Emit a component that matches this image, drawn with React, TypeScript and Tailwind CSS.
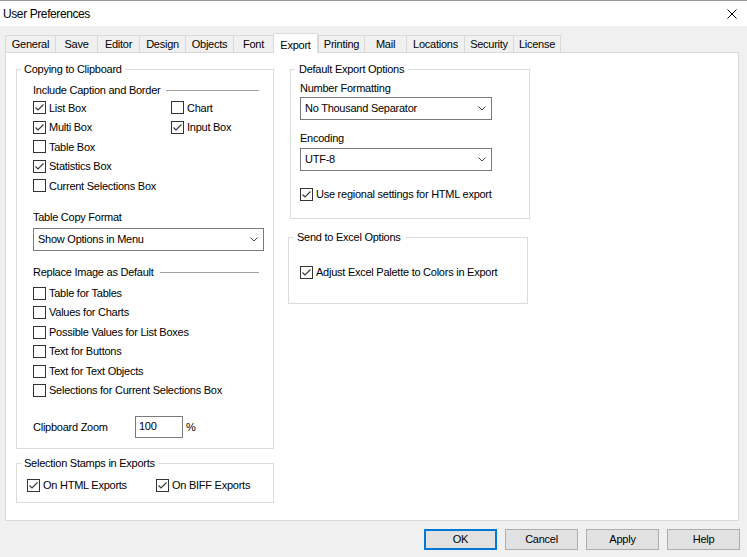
import React from 'react';

const tabs = [
  { name: 'General', w: 'w-[50px]' },
  { name: 'Save', w: 'w-[42px]' },
  { name: 'Editor', w: 'w-[42px]' },
  { name: 'Design', w: 'w-[46px]' },
  { name: 'Objects', w: 'w-[48px]' },
  { name: 'Font', w: 'w-[40px]' },
  { name: 'Export', w: 'w-[45px]', active: true },
  { name: 'Printing', w: 'w-[46px]' },
  { name: 'Mail', w: 'w-[42px]' },
  { name: 'Locations', w: 'w-[58px]' },
  { name: 'Security', w: 'w-[49px]' },
  { name: 'License', w: 'w-[48px]', last: true },
];

function Check({ checked }: { checked?: boolean }) {
  return (
    <span className="w-[13px] h-[13px] border border-[#333] bg-white flex items-center justify-center shrink-0">
      {checked && (
        <svg width="11" height="11" viewBox="0 0 11 11">
          <path d="M1.5 5.5L4 8L9.5 2.5" fill="none" stroke="#3a3a3a" strokeWidth="1.2" />
        </svg>
      )}
    </span>
  );
}

function CheckRow({ label, checked }: { label: string; checked?: boolean }) {
  return (
    <div className="h-[19.5px] flex items-center">
      <Check checked={checked} />
      <span className="ml-[3px] whitespace-nowrap">{label}</span>
    </div>
  );
}

function Select({ value, className }: { value: string; className: string }) {
  return (
    <div className={`h-[23px] border border-[#7a7a7a] bg-white flex items-center pl-[4px] pr-[5px] ${className}`}>
      <span className="flex-1">{value}</span>
      <svg width="8" height="5" viewBox="0 0 8 5">
        <path d="M0.5 0.5L4 4L7.5 0.5" fill="none" stroke="#444" strokeWidth="1" />
      </svg>
    </div>
  );
}

function Heading({ label }: { label: string }) {
  return (
    <div className="h-[16px] flex items-center">
      <span className="whitespace-nowrap">{label}</span>
      <span className="flex-1 h-px bg-[#a0a0a0] ml-[6px]" />
    </div>
  );
}

export default function App() {
  return (
    <div className="w-[747px] h-[557px] bg-[#f0f0f0] text-black text-[11px] tracking-[-0.25px] font-['Liberation_Sans',Arial,sans-serif] overflow-hidden">
      {/* title bar */}
      <div className="h-[26px] bg-white border-t border-[#999] flex items-center pl-[3px] pr-[10px]">
        <span className="flex-1 text-[12px] tracking-[-0.4px]">User Preferences</span>
        <svg width="10" height="10" viewBox="0 0 10 10">
          <path d="M0.5 0.5L9.5 9.5M9.5 0.5L0.5 9.5" stroke="#000" strokeWidth="1" />
        </svg>
      </div>

      {/* tabs */}
      <div className="flex items-end pl-[5px] pt-[7px]">
        {tabs.map((t) =>
          t.active ? (
            <div
              key={t.name}
              className={`${t.w} h-[20px] relative z-10 bg-white border border-b-0 border-[#d9d9d9] flex items-start justify-center pt-[3px]`}
            >
              {t.name}
            </div>
          ) : (
            <div
              key={t.name}
              className={`${t.w} h-[18px] border-l border-t border-[#d9d9d9] ${t.last ? 'border-r' : ''} flex items-center justify-center pb-[1px]`}
            >
              {t.name}
            </div>
          ),
        )}
      </div>

      {/* panel */}
      <div className="ml-[5px] -mt-px w-[734px] h-[469px] bg-white border border-[#d9d9d9] flex pl-[10px] pt-[8px]">
        {/* left column */}
        <div className="w-[258px] flex flex-col">
          <fieldset className="min-w-0 border border-[#dcdcdc]">
            <legend className="ml-[4px] px-[3px] leading-[16px]">Copying to Clipboard</legend>
            <div className="pl-[16px] pr-[14px] pb-[10px]">
              <div className="mt-[5px]">
                <Heading label="Include Caption and Border" />
              </div>
              <div className="grid grid-cols-[138px_1fr]">
                <CheckRow label="List Box" checked />
                <CheckRow label="Chart" />
                <CheckRow label="Multi Box" checked />
                <CheckRow label="Input Box" checked />
                <CheckRow label="Table Box" />
                <div />
                <CheckRow label="Statistics Box" checked />
                <div />
                <CheckRow label="Current Selections Box" />
              </div>
              <div className="mt-[13.5px] h-[16px] flex items-center">Table Copy Format</div>
              <Select value="Show Options in Menu" className="mt-[3px] w-[231px]" />
              <div className="mt-[13px]">
                <Heading label="Replace Image as Default" />
              </div>
              <div className="mt-[3.25px]">
                <CheckRow label="Table for Tables" />
                <CheckRow label="Values for Charts" />
                <CheckRow label="Possible Values for List Boxes" />
                <CheckRow label="Text for Buttons" />
                <CheckRow label="Text for Text Objects" />
                <CheckRow label="Selections for Current Selections Box" />
              </div>
              <div className="mt-[15.75px] flex items-center">
                <span className="w-[102px]">Clipboard Zoom</span>
                <div className="w-[48px] h-[22px] border border-[#7a7a7a] bg-white flex items-center pl-[3px] pb-[2px]">100</div>
                <span className="ml-[3px]">%</span>
              </div>
            </div>
          </fieldset>

          <fieldset className="min-w-0 mt-[6px] border border-[#dcdcdc]">
            <legend className="ml-[4px] px-[3px] leading-[16px]">Selection Stamps in Exports</legend>
            <div className="pl-[10px] pt-[4.75px] pb-[6.75px] flex">
              <div className="w-[129px]">
                <CheckRow label="On HTML Exports" checked />
              </div>
              <CheckRow label="On BIFF Exports" checked />
            </div>
          </fieldset>
        </div>

        {/* right column */}
        <div className="ml-[16px] flex flex-col">
          <fieldset className="min-w-0 w-[240px] border border-[#dcdcdc]">
            <legend className="ml-[4px] px-[4px] leading-[16px]">Default Export Options</legend>
            <div className="pl-[9px] pb-[14.25px]">
              <div className="mt-[3px] h-[16px] flex items-center">Number Formatting</div>
              <Select value="No Thousand Separator" className="mt-[1px] w-[192px]" />
              <div className="mt-[10px] h-[16px] flex items-center">Encoding</div>
              <Select value="UTF-8" className="mt-[2px] w-[192px]" />
              <div className="mt-[13.25px]">
                <CheckRow label="Use regional settings for HTML export" checked />
              </div>
            </div>
          </fieldset>

          <fieldset className="min-w-0 mt-[10px] -ml-[2px] w-[240px] border border-[#dcdcdc]">
            <legend className="ml-[4px] px-[4px] leading-[16px]">Send to Excel Options</legend>
            <div className="pl-[11px] pt-[17.25px] pb-[21.25px]">
              <CheckRow label="Adjust Excel Palette to Colors in Export" checked />
            </div>
          </fieldset>
        </div>
      </div>

      {/* buttons */}
      <div className="mt-[8px] pr-[7px] flex justify-end gap-[8px]">
        <button className="w-[73px] h-[21px] bg-[#e1e1e1] border-2 border-[#0078d7] flex items-center justify-center">OK</button>
        <button className="w-[73px] h-[21px] bg-[#e1e1e1] border border-[#adadad] flex items-center justify-center">Cancel</button>
        <button className="w-[73px] h-[21px] bg-[#e1e1e1] border border-[#adadad] flex items-center justify-center">Apply</button>
        <button className="w-[73px] h-[21px] bg-[#e1e1e1] border border-[#adadad] flex items-center justify-center">Help</button>
      </div>
    </div>
  );
}
